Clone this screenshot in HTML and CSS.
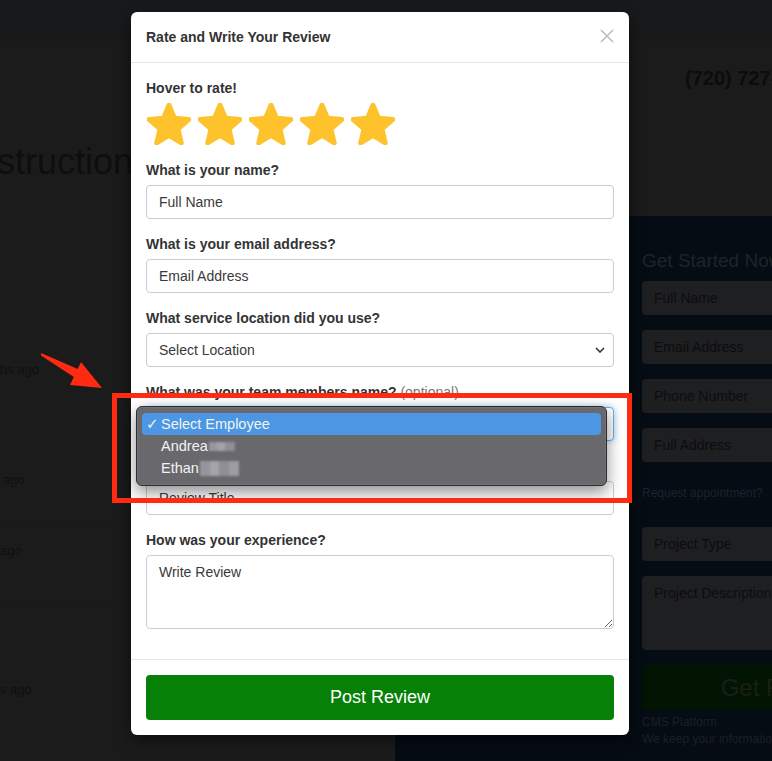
FILE: index.html
```html
<!DOCTYPE html>
<html lang="en">
<head>
<meta charset="utf-8">
<title>Rate and Write Your Review</title>
<link rel="stylesheet" href="styles.css">
</head>
<body>
<div class="topbar"></div>
<div class="page">
  <div class="left">
    <div class="hero">struction</div>
    <div class="meta m1">hs ago</div>
    <div class="meta m2">ago</div>
    <div class="sep s1"></div>
    <div class="meta m3">ago</div>
    <div class="sep s2"></div>
    <div class="meta m4">s ago</div>
  </div>
  <div class="right">
    <div class="phone">(720) 727-0000</div>
    <div class="panel">
      <div class="panel-title">Get Started Now</div>
      <div class="dark-input first">Full Name</div>
      <div class="dark-input">Email Address</div>
      <div class="dark-input">Phone Number</div>
      <div class="dark-input">Full Address</div>
      <div class="request">Request appointment?</div>
      <div class="dark-input project">Project Type</div>
      <div class="dark-input desc">Project Description</div>
      <div class="dark-btn">Get Free Quote</div>
      <div class="cms">CMS Platform</div>
      <div class="cms">We keep your information private</div>
    </div>
  </div>
</div>

<div class="modal">
  <div class="modal-header">
    <h4 class="modal-title">Rate and Write Your Review</h4>
    <span class="close"><svg width="14" height="14" viewBox="0 0 14 14"><path d="M1 1L13 13M13 1L1 13" stroke="#bdbdbd" stroke-width="1.6" fill="none"/></svg></span>
  </div>
  <div class="modal-body">
    <div class="label">Hover to rate!</div>
    <div class="stars">
      <svg class="star" viewBox="1 1 22 21"><path d="M12 17.27L18.18 21l-1.64-7.03L22 9.24l-7.19-.61L12 2 9.19 8.63 2 9.24l5.46 4.73L5.82 21z"/></svg>
      <svg class="star" viewBox="1 1 22 21"><path d="M12 17.27L18.18 21l-1.64-7.03L22 9.24l-7.19-.61L12 2 9.19 8.63 2 9.24l5.46 4.73L5.82 21z"/></svg>
      <svg class="star" viewBox="1 1 22 21"><path d="M12 17.27L18.18 21l-1.64-7.03L22 9.24l-7.19-.61L12 2 9.19 8.63 2 9.24l5.46 4.73L5.82 21z"/></svg>
      <svg class="star" viewBox="1 1 22 21"><path d="M12 17.27L18.18 21l-1.64-7.03L22 9.24l-7.19-.61L12 2 9.19 8.63 2 9.24l5.46 4.73L5.82 21z"/></svg>
      <svg class="star" viewBox="1 1 22 21"><path d="M12 17.27L18.18 21l-1.64-7.03L22 9.24l-7.19-.61L12 2 9.19 8.63 2 9.24l5.46 4.73L5.82 21z"/></svg>
    </div>
    <div class="group">
      <div class="label">What is your name?</div>
      <input class="control" type="text" placeholder="Full Name">
    </div>
    <div class="group">
      <div class="label">What is your email address?</div>
      <input class="control" type="text" placeholder="Email Address">
    </div>
    <div class="group">
      <div class="label">What service location did you use?</div>
      <div class="control select"><span>Select Location</span><svg width="10" height="6" viewBox="0 0 10 6"><path d="M1 1L5 5L9 1" stroke="#333" stroke-width="1.6" fill="none"/></svg></div>
    </div>
    <div class="group">
      <div class="label">What was your team members name? <span class="optional">(optional)</span></div>
      <div class="control select focus"><span>Select Employee</span><svg width="10" height="6" viewBox="0 0 10 6"><path d="M1 1L5 5L9 1" stroke="#333" stroke-width="1.6" fill="none"/></svg></div>
    </div>
    <div class="group">
      <div class="label">Give your review a title</div>
      <input class="control" type="text" placeholder="Review Title">
    </div>
    <div class="group">
      <div class="label">How was your experience?</div>
      <textarea class="control area" rows="3" placeholder="Write Review"></textarea>
    </div>
  </div>
  <div class="modal-footer">
    <button class="post" type="button">Post Review</button>
  </div>
</div>

<div class="menu">
  <div class="opt sel"><span class="check">✓</span>Select Employee</div>
  <div class="opt">Andrea<span class="redact r-a"></span></div>
  <div class="opt">Ethan<span class="redact r-e"></span></div>
</div>

<div class="highlight-box"></div>
<svg class="arrow" width="64" height="42" viewBox="0 0 64 42"><polygon points="1,3 37.7,19 41,12 62,38 30,35 33.8,27 1,5.5" fill="#ff2a12"/></svg>
</body>
</html>
```

FILE: styles.css
```css
* { box-sizing: border-box; }

html, body {
  margin: 0;
  padding: 0;
}

body {
  width: 772px;
  height: 761px;
  overflow: hidden;
  position: relative;
  background: #1b1b1b;
  font-family: "Liberation Sans", Arial, sans-serif;
}

/* ---------- background page ---------- */
.topbar {
  height: 41px;
  background: #18191b;
}

.page {
  display: grid;
  grid-template-columns: 395px 1fr;
  height: 720px;
}

.left {
  overflow: hidden;
}

.hero {
  margin: 101px 0 0 -3px;
  font-size: 36px;
  line-height: 40px;
  color: #0e0e0e;
  white-space: nowrap;
}

.meta {
  font-size: 13px;
  line-height: 16px;
  color: #101010;
}
.m1 { margin-top: 180px; }
.m2 { margin-top: 94px; padding-left: 3px; }
.m3 { margin-top: 19px; }
.m4 { margin-top: 78px; }

.sep {
  height: 1px;
  background: #181818;
}
.s1 { margin-top: 35px; }
.s2 { margin-top: 44px; }

.right {
  display: flex;
  flex-direction: column;
  overflow: hidden;
}

.phone {
  margin-top: 26px;
  padding-left: 290px;
  font-size: 20px;
  line-height: 22px;
  font-weight: bold;
  color: #0c0c0c;
  white-space: nowrap;
}

.panel {
  margin-top: 127px;
  height: 545px;
  background: #060c13;
  padding: 33px 0 0 247px;
}

.panel-title {
  font-size: 19px;
  line-height: 24px;
  color: #1e242b;
  white-space: nowrap;
}

.dark-input {
  width: 324px;
  height: 34px;
  margin-top: 15px;
  padding: 0 12px;
  display: flex;
  align-items: center;
  background: #1e1f21;
  border-radius: 4px;
  font-size: 14px;
  color: #0d0d0d;
  white-space: nowrap;
}
.dark-input.first { margin-top: 8px; }
.dark-input.project { margin-top: 26px; }
.dark-input.desc {
  height: 74px;
  align-items: flex-start;
  padding-top: 9px;
}

.request {
  margin-top: 23px;
  font-size: 12px;
  line-height: 16px;
  color: #1b232e;
}

.dark-btn {
  width: 324px;
  height: 45px;
  margin-top: 15px;
  background: #021502;
  border-radius: 4px;
  font-size: 24px;
  line-height: 45px;
  text-align: center;
  color: #1a1f1a;
}

.cms {
  font-size: 12px;
  line-height: 17px;
  color: #1b2026;
  white-space: nowrap;
}
.dark-btn + .cms { margin-top: 4px; }

/* ---------- modal ---------- */
.modal {
  position: absolute;
  top: 12px;
  left: 131px;
  width: 498px;
  background: #fff;
  border-radius: 6px;
  box-shadow: 0 5px 15px rgba(0, 0, 0, 0.5);
  color: #333;
}

.modal-header {
  display: flex;
  align-items: center;
  justify-content: space-between;
  padding: 15px;
  border-bottom: 1px solid #e5e5e5;
}

.modal-title {
  margin: 0;
  font-size: 14px;
  line-height: 20px;
  font-weight: bold;
  color: #333;
}

.close {
  display: flex;
  margin-top: -3px;
}

.modal-body {
  padding: 15px;
}

.label {
  font-size: 14px;
  line-height: 20px;
  font-weight: bold;
  color: #333;
  margin-bottom: 5px;
  white-space: nowrap;
}

.optional {
  font-weight: normal;
  color: #777;
}

.stars {
  display: flex;
  gap: 7px;
  height: 42px;
  margin-bottom: 15px;
  padding-left: 1px;
}

.star {
  width: 44px;
  height: 42px;
  fill: #fec22d;
  stroke: #fec22d;
  stroke-width: 2.4;
  stroke-linejoin: round;
}

.group {
  margin-bottom: 15px;
}

.control {
  display: block;
  width: 100%;
  height: 34px;
  padding: 6px 12px;
  border: 1px solid #ccc;
  border-radius: 4px;
  font-family: "Liberation Sans", Arial, sans-serif;
  font-size: 14px;
  line-height: 20px;
  color: #3a3a3a;
  background: #fff;
  outline: none;
}

.control::placeholder {
  color: #3a3a3a;
  opacity: 1;
}

.select {
  display: flex;
  align-items: center;
  justify-content: space-between;
  padding-right: 8px;
}

.select.focus {
  border-color: #66afe9;
  box-shadow: 0 0 6px rgba(102, 175, 233, 0.6);
}

.area {
  height: 74px;
  resize: vertical;
}

.modal-footer {
  padding: 15px;
  border-top: 1px solid #e5e5e5;
}

.post {
  display: block;
  width: 100%;
  height: 45px;
  border: none;
  border-radius: 4px;
  background: #078007;
  color: #fff;
  font-family: "Liberation Sans", Arial, sans-serif;
  font-size: 18px;
}

/* ---------- native dropdown popup ---------- */
.menu {
  position: absolute;
  top: 406px;
  left: 136px;
  width: 471px;
  height: 80px;
  padding: 6px 5px;
  background: #69686d;
  border: 1px solid #2d2c30;
  border-radius: 6px;
  box-shadow: 0 6px 16px rgba(0, 0, 0, 0.45), inset 0 0 0 1px rgba(255, 255, 255, 0.07);
}

.opt {
  height: 22px;
  line-height: 22px;
  padding-left: 19px;
  font-size: 14.5px;
  color: #f3f3f3;
  border-radius: 4px;
  display: flex;
  align-items: center;
  white-space: nowrap;
}

.opt.sel {
  background: #4b97e4;
  padding-left: 4px;
}

.check {
  display: inline-block;
  width: 15px;
  font-family: "DejaVu Sans", sans-serif;
  font-size: 15px;
}

.redact {
  display: inline-block;
  margin-left: 1px;
  background: linear-gradient(90deg, #98979d 0 30%, #a3a2a8 30% 60%, #908f95 60% 100%);
  filter: blur(0.8px);
}
.r-a { width: 26px; height: 9px; }
.r-e {
  width: 39px;
  height: 15px;
  background: linear-gradient(90deg, #96959b 0 25%, #a4a3a9 25% 50%, #8f8e94 50% 75%, #9d9ca2 75% 100%);
}

/* ---------- annotation ---------- */
.highlight-box {
  position: absolute;
  top: 393px;
  left: 112px;
  width: 520px;
  height: 110px;
  border: 5px solid #ff2a12;
}

.arrow {
  position: absolute;
  left: 40px;
  top: 350px;
}
```
